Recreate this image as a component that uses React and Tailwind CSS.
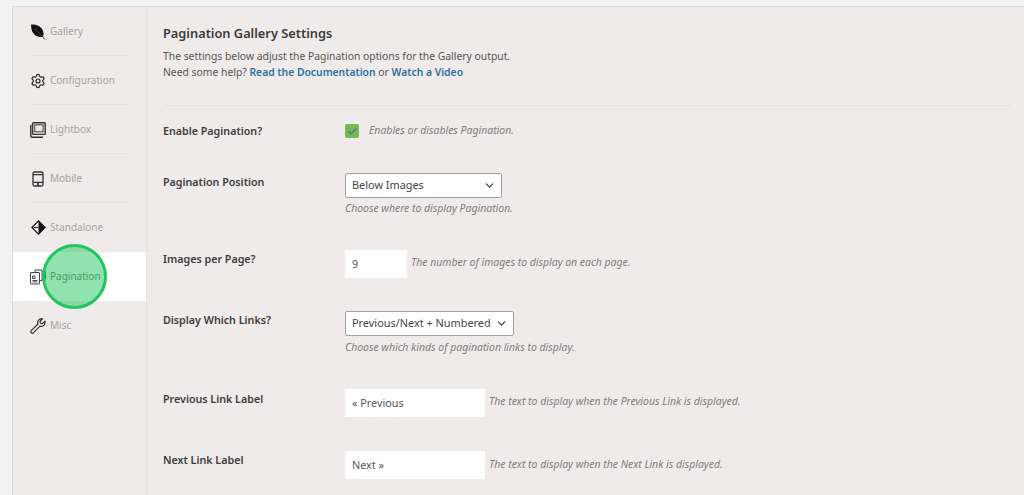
import { ChevronDown, Check, Settings } from 'lucide-react';

const font = "font-['Noto_Sans',sans-serif]";

function LeafIcon() {
  return (
    <svg width="16" height="16" viewBox="0 0 16 16" fill="#111">
      <path d="M1 0.5 C6 0.2 10.5 2 12.4 5.6 C13.6 8 13.8 10.6 13 13 C8.5 13.6 4 11.5 2.2 7.5 C1.4 5.4 1 3 1 0.5 Z" />
      <path d="M4.5 4 L15 15.5" stroke="#444" strokeWidth="1" />
    </svg>
  );
}

function LightboxIcon() {
  return (
    <svg width="16" height="16" viewBox="0 0 16 16" fill="none" stroke="#333" strokeWidth="1.2">
      <rect x="2.6" y="0.8" width="12.6" height="11.6" rx="0.8" strokeWidth="1.4" />
      <rect x="4.8" y="2.8" width="8.2" height="7" stroke="#555" />
      <path d="M0.8 3 V14 Q0.8 15.2 2 15.2 H13" strokeWidth="1.4" />
    </svg>
  );
}

function MobileIcon() {
  return (
    <svg width="16" height="16" viewBox="0 0 16 16" fill="none" stroke="#333" strokeWidth="1.3">
      <rect x="3" y="1" width="10" height="14" rx="1.5" />
      <path d="M3 3.6 H13 M3 11.4 H13" />
      <path d="M8 11.4 V15" strokeWidth="1.8" />
    </svg>
  );
}

function StandaloneIcon() {
  return (
    <svg width="15" height="15" viewBox="0 0 16 16">
      <path d="M8 1 L15 8 L8 15 L1 8 Z" fill="none" stroke="#111" strokeWidth="1.3" />
      <path d="M8 1 L15 8 L8 15 Z" fill="#111" />
      <path d="M3 8 H8" stroke="#111" strokeWidth="1" />
    </svg>
  );
}

function PaginationIcon() {
  return (
    <svg width="16" height="16" viewBox="0 0 16 16" fill="none" stroke="#444" strokeWidth="1">
      <rect x="0.5" y="3.5" width="9" height="11.5" rx="0.5" />
      <path d="M5 3.5 V1 H12 V11.5 H9.5 M12 2.5 H15.5 V10 H12" />
      <path d="M2.5 7 H5 V9.5 H2.5 Z M2.5 11.5 H7.5 M2.5 13 H7.5" />
    </svg>
  );
}

function WrenchIcon() {
  return (
    <svg width="16" height="16" viewBox="0 0 16 16" fill="none" stroke="#333" strokeWidth="1.2" strokeLinejoin="round">
      <path d="M15 3.2 L12.4 5.6 L10.4 5.2 L10 3.2 L12.6 0.8 C10.6 0.2 8.2 1.4 7.8 3.6 C7.6 4.6 7.8 5.4 8 6 L1.2 12.6 C0.6 13.2 0.8 14.2 1.4 14.8 C2 15.4 2.9 15.4 3.4 14.9 L10 8.2 C10.8 8.5 11.8 8.5 12.8 8 C14.5 7.2 15.4 5.2 15 3.2 Z" />
    </svg>
  );
}

function NavItem({ icon, label, active, last }) {
  return (
    <div className={`h-[49px] flex items-center relative pl-[17px] gap-[4px] ${active ? 'bg-white' : ''}`}>
      <span className="w-[16px] flex justify-center">{icon}</span>
      <span className={`text-[10px] ${active ? 'text-[#6f6f6f]' : 'text-[#a5a3a3]'}`}>{label}</span>
      {!active && !last && <span className="absolute left-[16px] right-[18px] bottom-0 h-px bg-[#e8e4e4]" />}
    </div>
  );
}

function Row({ label, className, children }) {
  return (
    <div className={`flex ${className}`}>
      <div className="w-[182px] shrink-0 text-[10.7px] font-semibold text-[#3c3c3c] leading-[16px]">{label}</div>
      <div>{children}</div>
    </div>
  );
}

function Select({ value, width }) {
  return (
    <div className={`h-[25px] ${width} bg-white border border-[#a0a0a0] rounded-[2px] flex items-center justify-between pl-[6px] pr-[5px] text-[10.9px] text-[#444]`}>
      <span>{value}</span>
      <ChevronDown size={13} strokeWidth={2} color="#333" />
    </div>
  );
}

function Input({ value, width }) {
  return <div className={`h-[28px] ${width} bg-white flex items-center pl-[7px] text-[10.8px] text-[#555] shrink-0`}>{value}</div>;
}

function Hint({ children, className = '' }) {
  return <div className={`text-[10.45px] italic text-[#7f7d7d] ${className}`}>{children}</div>;
}

export default function App() {
  return (
    <div className={`h-[495px] w-[1024px] overflow-hidden bg-[#f2f2f2] pl-[12px] pt-[6px] ${font}`}>
      <div className="h-[489px] flex bg-[#f0ebeb] border-t border-l border-[#dcdcdc]">
        <aside className="w-[134px] shrink-0 border-r border-[#e6e2e2] relative">
          <NavItem icon={<LeafIcon />} label="Gallery" />
          <NavItem icon={<Settings size={16} strokeWidth={1.8} color="#222" />} label="Configuration" />
          <NavItem icon={<LightboxIcon />} label="Lightbox" />
          <NavItem icon={<MobileIcon />} label="Mobile" />
          <NavItem icon={<StandaloneIcon />} label="Standalone" last />
          <NavItem icon={<PaginationIcon />} label="Pagination" active />
          <NavItem icon={<WrenchIcon />} label="Misc" last />
          <div className="absolute left-[29px] top-[237px] w-[65px] h-[65px] rounded-full bg-[#22c55e]/50 border-[3px] border-[#22c55e]" />
        </aside>
        <main className="flex-1 pl-[16px] pr-[12px] pt-[17px]">
          <h2 className="text-[12.8px] font-semibold text-[#3a3a3a] leading-[19px]">Pagination Gallery Settings</h2>
          <p className="mt-[5px] text-[10.35px] leading-[16px] text-[#555]">
            The settings below adjust the Pagination options for the Gallery output.
            <br />
            Need some help? <span className="font-semibold text-[#2e6f9e]">Read the Documentation</span> or{' '}
            <span className="font-semibold text-[#2e6f9e]">Watch a Video</span>
          </p>
          <div className="mt-[25px] h-px bg-[#e5e1e1]" />
          <Row label="Enable Pagination?" className="mt-[17px]">
            <div className="flex items-center gap-[10px] h-[16px]">
              <span className="w-[14px] h-[14px] rounded-[2px] bg-[#76b852] flex items-center justify-center">
                <Check size={11} strokeWidth={3} color="#3f7f9f" />
              </span>
              <Hint>Enables or disables Pagination.</Hint>
            </div>
          </Row>
          <Row label="Pagination Position" className="mt-[35px]">
            <div className="-mt-[1px]">
              <Select value="Below Images" width="w-[157px]" />
              <Hint className="mt-[3px]">Choose where to display Pagination.</Hint>
            </div>
          </Row>
          <Row label="Images per Page?" className="mt-[34px]">
            <div className="flex items-center gap-[4px] -mt-[1px]">
              <Input value="9" width="w-[62px]" />
              <Hint className="-mt-[1px]">The number of images to display on each page.</Hint>
            </div>
          </Row>
          <Row label="Display Which Links?" className="mt-[34px]">
            <div className="-mt-[1px]">
              <Select value="Previous/Next + Numbered" width="w-[169px]" />
              <Hint className="mt-[4px]">Choose which kinds of pagination links to display.</Hint>
            </div>
          </Row>
          <Row label="Previous Link Label" className="mt-[36px]">
            <div className="flex items-start gap-[4px] -mt-[2px]">
              <Input value="« Previous" width="w-[140px]" />
              <Hint className="mt-[5px]">The text to display when the Previous Link is displayed.</Hint>
            </div>
          </Row>
          <Row label="Next Link Label" className="mt-[35px]">
            <div className="flex items-start gap-[4px] -mt-[1px]">
              <Input value="Next »" width="w-[140px]" />
              <Hint className="mt-[6px]">The text to display when the Next Link is displayed.</Hint>
            </div>
          </Row>
        </main>
      </div>
    </div>
  );
}
